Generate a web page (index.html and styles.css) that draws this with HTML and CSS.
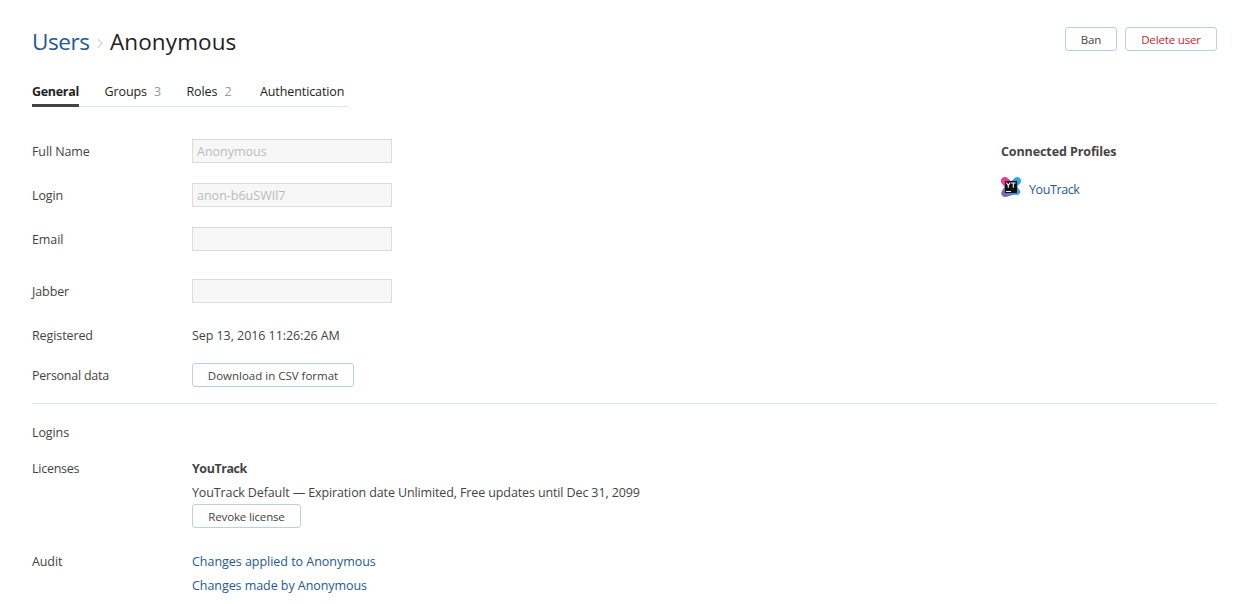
FILE: index.html
```html
<!DOCTYPE html>
<html lang="en">
<head>
<meta charset="utf-8">
<title>Anonymous – Users</title>
<link rel="stylesheet" href="styles.css">
</head>
<body>
<main class="page">
  <header class="header">
    <h1 class="breadcrumbs">
      <a class="link crumb-parent" href="#">Users</a>
      <svg class="crumb-arrow" width="6" height="11" viewBox="0 0 6 11"><path d="M.8 1l4.2 4.5L.8 10" fill="none" stroke="#d4d4d4" stroke-width="1.2"/></svg>
      <span class="crumb-current">Anonymous</span>
    </h1>
    <div class="actions">
      <button class="button button-ban">Ban</button>
      <button class="button button-delete">Delete user</button>
    </div>
  </header>

  <nav class="tabs">
    <a class="tab tab-general tab-active" href="#">General</a>
    <a class="tab tab-groups" href="#">Groups<span class="tab-count">3</span></a>
    <a class="tab tab-roles" href="#">Roles<span class="tab-count">2</span></a>
    <a class="tab tab-auth" href="#">Authentication</a>
  </nav>

  <div class="content">
    <section class="form">
      <div class="row"><label class="label">Full Name</label><input class="input" value="Anonymous" disabled></div>
      <div class="row"><label class="label">Login</label><input class="input" value="anon-b6uSWIl7" disabled></div>
      <div class="row row-email"><label class="label">Email</label><input class="input" disabled></div>
      <div class="row"><label class="label">Jabber</label><input class="input" disabled></div>
      <div class="row row-registered"><span class="label">Registered</span><span class="text registered">Sep 13, 2016 11:26:26 AM</span></div>
      <div class="row row-data"><span class="label label-data">Personal data</span><button class="button button-download">Download in CSV format</button></div>
    </section>
    <aside class="profiles">
      <h2 class="strong profiles-title">Connected Profiles</h2>
      <div class="profile">
        <svg class="logo" width="20" height="20" viewBox="0 0 20 20">
          <defs>
            <linearGradient id="blue" x1="1" y1="0" x2="0" y2="1"><stop offset="0" stop-color="#22b1ef"/><stop offset=".55" stop-color="#4a86d0"/><stop offset="1" stop-color="#8c5aa8"/></linearGradient>
          </defs>
          <path d="M10 8l6.500 2 2.800 4.200A3.400 3.400 0 0 1 15.500 18L8 17z" fill="#35a5dc"/>
          <path d="M16.200 0a3.800 3.800 0 0 1 2.800 6.400L16.500 9v7.500L5 20a4 4 0 0 1-4.300-5.800L3.500 10 13.500 1.200A4 4 0 0 1 16.200 0z" fill="url(#blue)"/>
          <path d="M4 0a4 4 0 0 1 3 1.400L10 4v6H3.500L1 6.500A3.800 3.800 0 0 1 4 0z" fill="#ee3b95"/>
          <path d="M4 4h12v12H4z" fill="#111"/>
          <path d="M5.400 5.500l1.900 3 1.900-3M7.300 8.300v2.500M10 6h4.600M12.300 6v4.800" fill="none" stroke="#fff" stroke-width="1.100"/>
          <path d="M5 14.500h5" stroke="#fff"/>
        </svg>
        <a class="link profile-link" href="#">YouTrack</a>
      </div>
    </aside>
  </div>

  <section class="details">
    <div class="row row-logins"><span class="label">Logins</span></div>
    <div class="row row-licenses">
      <span class="label label-licenses">Licenses</span>
      <div class="stack">
        <strong class="strong license-name">YouTrack</strong>
        <span class="text license-text">YouTrack Default — Expiration date Unlimited, Free updates until Dec 31, 2099</span>
        <button class="button button-revoke">Revoke license</button>
      </div>
    </div>
    <div class="row row-audit">
      <span class="label">Audit</span>
      <div class="stack">
        <a class="link audit-applied" href="#">Changes applied to Anonymous</a>
        <a class="link audit-made" href="#">Changes made by Anonymous</a>
      </div>
    </div>
  </section>
</main>
</body>
</html>
```
FILE: styles.css
```css
* { box-sizing: border-box; }

body {
  margin: 0;
  background: #fff;
  color: #444;
  font: 12.5px/26px "Segoe UI", "Open Sans", "Noto Sans", sans-serif;
  letter-spacing: -0.1px;
  white-space: nowrap;
}

.page { padding: 27px 31px 0 32px; }
.link { color: #1d5a96; text-decoration: none; }

.header { display: flex; justify-content: space-between; height: 52px; }
.breadcrumbs {
  display: flex;
  align-items: center;
  height: 30px;
  margin: 0;
  font-size: 22.5px;
  font-weight: 400;
}
.crumb-parent { width: 57px; letter-spacing: -0.4px; }
.crumb-arrow { margin: 2px 7px 0 8px; }
.crumb-current { color: #222; letter-spacing: 0.1px; }

.actions { display: flex; gap: 8px; }
.button {
  height: 24px;
  padding: 1px 0 0;
  border: 1px solid #b8d1e5;
  border-radius: 3px;
  background: #fff;
  color: #444;
  font: 11.5px/21px "Segoe UI", "Open Sans", "Noto Sans", sans-serif;
  letter-spacing: -0.15px;
  text-align: center;
}
.button-ban { width: 52px; }
.button-delete { width: 92px; color: #c22731; }
.button-download { width: 162px; letter-spacing: 0; }
.button-revoke { width: 109px; }

.tabs {
  display: flex;
  gap: 26px;
  width: 316px;
  height: 28px;
  border-bottom: 1px solid #dfe5eb;
}
.tab { height: 28px; color: #222; text-decoration: none; }
.tab-active { border-bottom: 3px solid #444; font-weight: 700; letter-spacing: -0.3px; }
.tab-general { width: 46.500px; }
.tab-groups { width: 56px; }
.tab-roles { width: 47.500px; }
.tab-count { margin-left: 7px; color: #999; }

.content {
  display: flex;
  justify-content: space-between;
  height: 297px;
  padding-top: 32px;
  border-bottom: 1px solid #dfe5eb;
}
.row { display: flex; margin-bottom: 20px; }
.row-email { margin-bottom: 28px; }
.row-registered { margin-bottom: 16px; }
.label { width: 160px; height: 24px; }
.label-data, .label-licenses { letter-spacing: -0.25px; }
.text { height: 24px; }
.registered { letter-spacing: -0.06px; }
.input {
  width: 200px;
  height: 24px;
  padding: 1px 4px;
  border: 1px solid #ddd;
  border-radius: 0;
  background: #f7f7f7;
  color: #bbb;
  font: inherit;
  line-height: 20px;
  letter-spacing: 0;
}

.profiles { width: 216px; }
.strong { height: 24px; margin: 0; font-size: 12.5px; font-weight: 700; }
.profile { display: flex; gap: 8px; padding-top: 14px; }
.profile-link { letter-spacing: -0.4px; }
.logo { display: block; }

.details { padding-top: 16px; }
.row-logins { margin-bottom: 12px; }
.row-licenses { margin-bottom: 21px; }
.license-name { letter-spacing: -0.45px; }
.license-text { letter-spacing: -0.12px; }
.stack { display: flex; flex-direction: column; align-items: flex-start; }
.stack .link { height: 24px; }
.audit-applied { letter-spacing: -0.03px; }
.audit-made { letter-spacing: -0.06px; }
```
